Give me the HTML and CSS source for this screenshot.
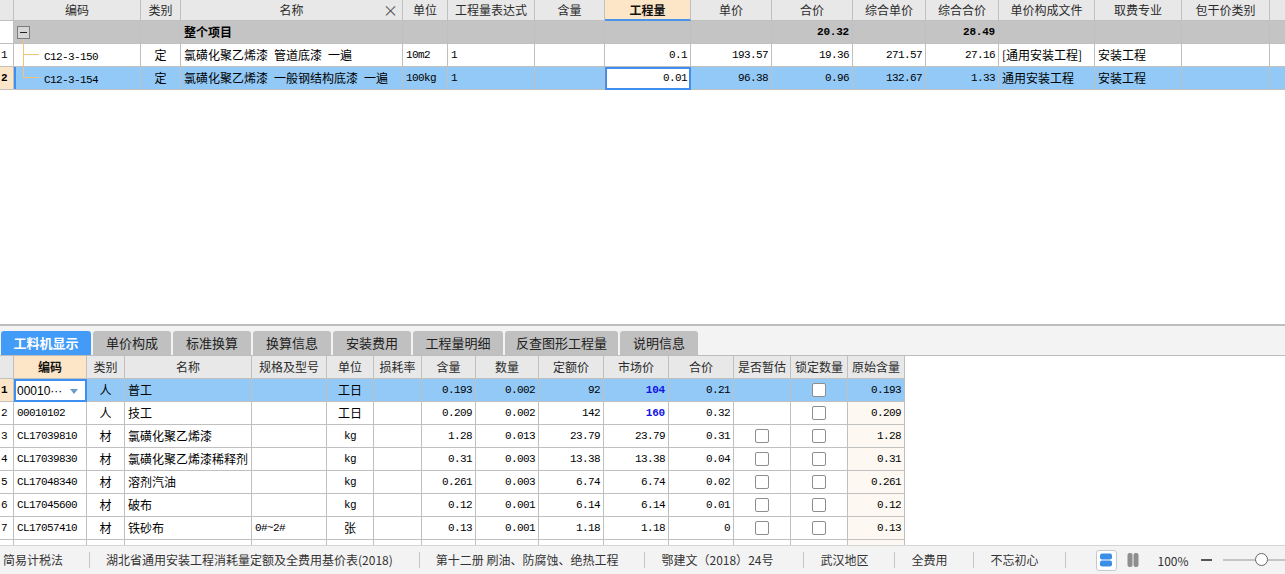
FILE: index.html
```html
<!DOCTYPE html>
<html lang="zh-CN">
<head>
<meta charset="utf-8">
<title>工料机</title>
<link rel="stylesheet" href="styles.css">
</head>
<body>
<div class="top-pane">
  <div class="tgrid">
    <div class="r hd">
      <div class="c"></div>
      <div class="c ctr">编码</div>
      <div class="c ctr">类别</div>
      <div class="c ctr hx">名称<span class="xbtn">×</span></div>
      <div class="c ctr">单位</div>
      <div class="c ctr">工程量表达式</div>
      <div class="c ctr">含量</div>
      <div class="c ctr hcur">工程量</div>
      <div class="c ctr">单价</div>
      <div class="c ctr">合价</div>
      <div class="c ctr">综合单价</div>
      <div class="c ctr">综合合价</div>
      <div class="c ctr">单价构成文件</div>
      <div class="c ctr">取费专业</div>
      <div class="c ctr">包干价类别</div>
      <div class="c last"></div>
    </div>
    <div class="r sum">
      <div class="c rn"></div>
      <div class="c code"><span class="tbox"></span><span class="tv tv-box"></span></div>
      <div class="c"></div>
      <div class="c b">整个项目</div>
      <div class="c"></div>
      <div class="c"></div>
      <div class="c"></div>
      <div class="c"></div>
      <div class="c"></div>
      <div class="c n b">20.32</div>
      <div class="c"></div>
      <div class="c n b">28.49</div>
      <div class="c"></div>
      <div class="c"></div>
      <div class="c"></div>
      <div class="c last"></div>
    </div>
    <div class="r">
      <div class="c rn">1</div>
      <div class="c code"><span class="tv tv-full"></span><span class="th"></span><span class="mono">C12-3-150</span></div>
      <div class="c ctr">定</div>
      <div class="c">氯磺化聚乙烯漆&ensp;管道底漆&ensp;一遍</div>
      <div class="c mono">10m2</div>
      <div class="c mono">1</div>
      <div class="c"></div>
      <div class="c n">0.1</div>
      <div class="c n">193.57</div>
      <div class="c n">19.36</div>
      <div class="c n">271.57</div>
      <div class="c n">27.16</div>
      <div class="c">[通用安装工程]</div>
      <div class="c">安装工程</div>
      <div class="c"></div>
      <div class="c last"></div>
    </div>
    <div class="r sel">
      <div class="c rn cur">2</div>
      <div class="c code focus"><span class="tv tv-half"></span><span class="th"></span><span class="mono">C12-3-154</span></div>
      <div class="c ctr">定</div>
      <div class="c">氯磺化聚乙烯漆&ensp;一般钢结构底漆&ensp;一遍</div>
      <div class="c mono">100kg</div>
      <div class="c mono">1</div>
      <div class="c"></div>
      <div class="c n edit">0.01</div>
      <div class="c n">96.38</div>
      <div class="c n">0.96</div>
      <div class="c n">132.67</div>
      <div class="c n">1.33</div>
      <div class="c">通用安装工程</div>
      <div class="c">安装工程</div>
      <div class="c"></div>
      <div class="c last"></div>
    </div>
  </div>
</div>

<div class="splitter"></div>

<div class="tabbar">
  <div class="tab active w90">工料机显示</div>
  <div class="tab w78">单价构成</div>
  <div class="tab w78">标准换算</div>
  <div class="tab w78">换算信息</div>
  <div class="tab w78">安装费用</div>
  <div class="tab w90">工程量明细</div>
  <div class="tab w113">反查图形工程量</div>
  <div class="tab w78">说明信息</div>
</div>

<div class="bottom-pane">
  <div class="bgrid">
    <div class="r hd">
      <div class="c"></div>
      <div class="c ctr hcur2">编码</div>
      <div class="c ctr">类别</div>
      <div class="c ctr">名称</div>
      <div class="c ctr">规格及型号</div>
      <div class="c ctr">单位</div>
      <div class="c ctr">损耗率</div>
      <div class="c ctr">含量</div>
      <div class="c ctr">数量</div>
      <div class="c ctr">定额价</div>
      <div class="c ctr">市场价</div>
      <div class="c ctr">合价</div>
      <div class="c ctr">是否暂估</div>
      <div class="c ctr">锁定数量</div>
      <div class="c ctr">原始含量</div>
    </div>
    <div class="r sel">
      <div class="c rn cur">1</div>
      <div class="c edit2"><span class="etext">00010···</span><span class="dd"></span></div>
      <div class="c ctr">人</div>
      <div class="c">普工</div>
      <div class="c"></div>
      <div class="c ctr">工日</div>
      <div class="c"></div>
      <div class="c n">0.193</div>
      <div class="c n">0.002</div>
      <div class="c n">92</div>
      <div class="c n mp">104</div>
      <div class="c n">0.21</div>
      <div class="c"></div>
      <div class="c ctr"><span class="cb"></span></div>
      <div class="c n">0.193</div>
    </div>
    <div class="r">
      <div class="c rn">2</div>
      <div class="c mono">00010102</div>
      <div class="c ctr">人</div>
      <div class="c">技工</div>
      <div class="c"></div>
      <div class="c ctr">工日</div>
      <div class="c"></div>
      <div class="c n">0.209</div>
      <div class="c n">0.002</div>
      <div class="c n">142</div>
      <div class="c n mp">160</div>
      <div class="c n">0.32</div>
      <div class="c"></div>
      <div class="c ctr"><span class="cb"></span></div>
      <div class="c n orig">0.209</div>
    </div>
    <div class="r">
      <div class="c rn">3</div>
      <div class="c mono">CL17039810</div>
      <div class="c ctr">材</div>
      <div class="c">氯磺化聚乙烯漆</div>
      <div class="c"></div>
      <div class="c ctr mono">kg</div>
      <div class="c"></div>
      <div class="c n">1.28</div>
      <div class="c n">0.013</div>
      <div class="c n">23.79</div>
      <div class="c n">23.79</div>
      <div class="c n">0.31</div>
      <div class="c ctr"><span class="cb"></span></div>
      <div class="c ctr"><span class="cb"></span></div>
      <div class="c n orig">1.28</div>
    </div>
    <div class="r">
      <div class="c rn">4</div>
      <div class="c mono">CL17039830</div>
      <div class="c ctr">材</div>
      <div class="c">氯磺化聚乙烯漆稀释剂</div>
      <div class="c"></div>
      <div class="c ctr mono">kg</div>
      <div class="c"></div>
      <div class="c n">0.31</div>
      <div class="c n">0.003</div>
      <div class="c n">13.38</div>
      <div class="c n">13.38</div>
      <div class="c n">0.04</div>
      <div class="c ctr"><span class="cb"></span></div>
      <div class="c ctr"><span class="cb"></span></div>
      <div class="c n orig">0.31</div>
    </div>
    <div class="r">
      <div class="c rn">5</div>
      <div class="c mono">CL17048340</div>
      <div class="c ctr">材</div>
      <div class="c">溶剂汽油</div>
      <div class="c"></div>
      <div class="c ctr mono">kg</div>
      <div class="c"></div>
      <div class="c n">0.261</div>
      <div class="c n">0.003</div>
      <div class="c n">6.74</div>
      <div class="c n">6.74</div>
      <div class="c n">0.02</div>
      <div class="c ctr"><span class="cb"></span></div>
      <div class="c ctr"><span class="cb"></span></div>
      <div class="c n orig">0.261</div>
    </div>
    <div class="r">
      <div class="c rn">6</div>
      <div class="c mono">CL17045600</div>
      <div class="c ctr">材</div>
      <div class="c">破布</div>
      <div class="c"></div>
      <div class="c ctr mono">kg</div>
      <div class="c"></div>
      <div class="c n">0.12</div>
      <div class="c n">0.001</div>
      <div class="c n">6.14</div>
      <div class="c n">6.14</div>
      <div class="c n">0.01</div>
      <div class="c ctr"><span class="cb"></span></div>
      <div class="c ctr"><span class="cb"></span></div>
      <div class="c n orig">0.12</div>
    </div>
    <div class="r">
      <div class="c rn">7</div>
      <div class="c mono">CL17057410</div>
      <div class="c ctr">材</div>
      <div class="c">铁砂布</div>
      <div class="c mono">0#~2#</div>
      <div class="c ctr">张</div>
      <div class="c"></div>
      <div class="c n">0.13</div>
      <div class="c n">0.001</div>
      <div class="c n">1.18</div>
      <div class="c n">1.18</div>
      <div class="c n">0</div>
      <div class="c ctr"><span class="cb"></span></div>
      <div class="c ctr"><span class="cb"></span></div>
      <div class="c n orig">0.13</div>
    </div>
    <div class="r">
      <div class="c rn"></div>
      <div class="c"></div>
      <div class="c"></div>
      <div class="c"></div>
      <div class="c"></div>
      <div class="c"></div>
      <div class="c"></div>
      <div class="c"></div>
      <div class="c"></div>
      <div class="c"></div>
      <div class="c"></div>
      <div class="c"></div>
      <div class="c"></div>
      <div class="c"></div>
      <div class="c orig"></div>
    </div>
  </div>
</div>

<div class="status">
  <span class="si first">简易计税法</span>
  <span class="si">湖北省通用安装工程消耗量定额及全费用基价表(2018)</span>
  <span class="si">第十二册 刷油、防腐蚀、绝热工程</span>
  <span class="si wide">鄂建文（2018）24号</span>
  <span class="si">武汉地区</span>
  <span class="si">全费用</span>
  <span class="si">不忘初心</span>
  <div class="zoomctl">
    <span class="ibox">
      <svg width="12" height="14" viewBox="0 0 12 14"><rect x="0" y="0.5" width="12" height="6" rx="2" fill="#3a8ee8"/><rect x="0" y="7.5" width="12" height="6" rx="2" fill="#3a8ee8"/></svg>
    </span>
    <span class="igray">
      <svg width="12" height="14" viewBox="0 0 12 14"><rect x="0.5" y="0" width="5" height="14" rx="2" fill="#8e8e8e"/><rect x="6.5" y="0" width="5" height="14" rx="2" fill="#8e8e8e"/></svg>
    </span>
    <span class="pct">100%</span>
    <span class="minus"></span>
    <span class="slider"><span class="knob"></span></span>
  </div>
</div>
</body>
</html>
```
FILE: styles.css
```css
* { box-sizing: border-box; }
html, body { margin: 0; padding: 0; }
body {
  width: 1285px;
  height: 574px;
  overflow: hidden;
  display: flex;
  flex-direction: column;
  background: #fff;
  color: #000;
  font-family: "Noto Sans CJK SC", "Noto Sans", sans-serif;
  font-size: 12px;
}

/* ---------- grids ---------- */
.r { display: grid; height: 23px; }
.r.hd { height: 21px; }
.tgrid .r {
  grid-template-columns: 14px 127px 40px 222px 45px 87px 70px 86px 81px 81px 73px 73px 96px 87px 88px 1fr;
}
.bgrid { width: 905px; }
.bgrid .r {
  grid-template-columns: 14px 73px 38px 127px 75px 47px 48px 54px 63px 65px 65px 65px 57px 57px 57px;
}
.bgrid .r.hd { height: 23px; }

.c {
  border-right: 1px solid #c0c0c0;
  border-bottom: 1px solid #c0c0c0;
  padding: 0 3px;
  line-height: 22px;
  white-space: nowrap;
  overflow: hidden;
  position: relative;
}
.c.last { border-right: none; }
.hd .c { background: #e8e8e8; color: #2b2b2b; line-height: 20px; }
.bgrid .hd .c { line-height: 22px; }
.ctr { text-align: center; }
.b { font-weight: bold; }
.mono {
  font-family: "Liberation Mono", monospace;
  font-size: 11px;
  letter-spacing: -0.6px;
}
.n {
  text-align: right;
  font-family: "Liberation Mono", monospace;
  font-size: 11px;
  letter-spacing: -0.6px;
  padding-right: 3px;
}
.n.b { letter-spacing: -0.2px; }
.rn {
  padding: 0 0 0 1px;
  font-family: "Liberation Mono", monospace;
  font-size: 11px;
}
.rn.cur { background: #fde6c8 !important; font-weight: bold; }

.hd .hcur {
  background: #fde6c8;
  font-weight: bold;
  color: #111;
  border-bottom: 2px solid #4a94ea;
}
.hd .hcur2 { background: #fde6c8; font-weight: bold; color: #111; }
.xbtn {
  position: absolute;
  right: 4px;
  top: 0;
  font-size: 15px;
  line-height: 20px;
  color: #555;
}

.sum .c { background: #c4c4c4; }
.sum .rn { background: #fff; }
.sel .c { background: #93c9f6; }
.focus { box-shadow: inset 2px 0 0 #3f8ff0; }
.sel .edit {
  background: #fff;
  outline: 2px solid #3f8ff0;
  outline-offset: -2px;
}

/* tree */
.code { padding-left: 30px; }
.tbox {
  position: absolute;
  left: 3px;
  top: 5px;
  width: 13px;
  height: 13px;
  border: 1px solid #7c7c7c;
  background: #d6d6d6;
}
.tbox::after {
  content: "";
  position: absolute;
  left: 2px;
  top: 5px;
  width: 7px;
  height: 1px;
  background: #222;
}
.tv { position: absolute; left: 9px; width: 1px; background: #f5c27a; }
.tv-box { top: 18px; bottom: 0; }
.tv-full { top: 0; bottom: 0; }
.tv-half { top: 0; height: 11px; }
.th { position: absolute; left: 9px; top: 10px; width: 16px; height: 1px; background: #f5c27a; }

/* ---------- panes ---------- */
.top-pane { height: 324px; overflow: hidden; background: #fff; }
.splitter { height: 2px; background: #bdbdbd; }
.tabbar {
  height: 30px;
  background: #f3f3f3;
  border-bottom: 1px solid #bdbdbd;
  display: flex;
  align-items: flex-end;
  gap: 2px;
  padding-left: 1px;
}
.tab {
  height: 24px;
  line-height: 24px;
  text-align: center;
  font-size: 13px;
  color: #222;
  background: #c0c0c0;
  border-radius: 3px 3px 0 0;
}
.tab.active { background: #439bf8; color: #fff; font-weight: bold; }
.w90 { width: 90px; }
.w78 { width: 78px; }
.w113 { width: 113px; }

.bottom-pane { height: 189px; overflow: hidden; background: #fff; }
.edit2 {
  background: #fff !important;
  outline: 2px solid #3f8ff0;
  outline-offset: -2px;
  padding-left: 3px;
}
.etext { font-family: "Liberation Sans", sans-serif; font-size: 12px; }
.dd {
  position: absolute;
  right: 8px;
  top: 10px;
  width: 0;
  height: 0;
  border-left: 4px solid transparent;
  border-right: 4px solid transparent;
  border-top: 5px solid #6e9cc9;
}
.mp { color: #1212e6; font-weight: bold; letter-spacing: -0.2px; }
.orig { background: #fdf8f1; }
.cb {
  display: inline-block;
  vertical-align: middle;
  width: 14px;
  height: 14px;
  border: 1px solid #8d8d8d;
  border-radius: 2px;
  background: #fff;
  margin-top: -3px;
}

/* ---------- status bar ---------- */
.status {
  height: 29px;
  border-top: 1px solid #d4d4d4;
  background: #f3f3f3;
  display: flex;
  align-items: center;
  color: #333;
  font-size: 12px;
}
.si {
  padding: 0 26px 0 16px;
  border-right: 1px solid #c6c6c6;
  height: 16px;
  line-height: 16px;
  white-space: nowrap;
}
.si.first { padding-left: 3px; }
.si.wide { padding-right: 30px; }
.zoomctl { display: flex; align-items: center; margin-left: 30px; flex: 1; }
.ibox {
  width: 21px;
  height: 21px;
  border: 1px solid #c9c9c9;
  border-radius: 3px;
  background: #fff;
  display: flex;
  align-items: center;
  justify-content: center;
}
.ibox svg, .igray svg { display: block; }
.igray { margin-left: 10px; display: flex; }
.pct { margin-left: 19px; font-size: 12px; color: #333; }
.minus { margin-left: 12px; width: 11px; height: 2px; background: #555; }
.slider {
  margin-left: 11px;
  flex: 1;
  height: 2px;
  background: #c4c4c4;
  position: relative;
}
.knob {
  position: absolute;
  left: 32px;
  top: -6px;
  width: 13px;
  height: 13px;
  border-radius: 50%;
  border: 1.5px solid #666;
  background: #fff;
}
```
